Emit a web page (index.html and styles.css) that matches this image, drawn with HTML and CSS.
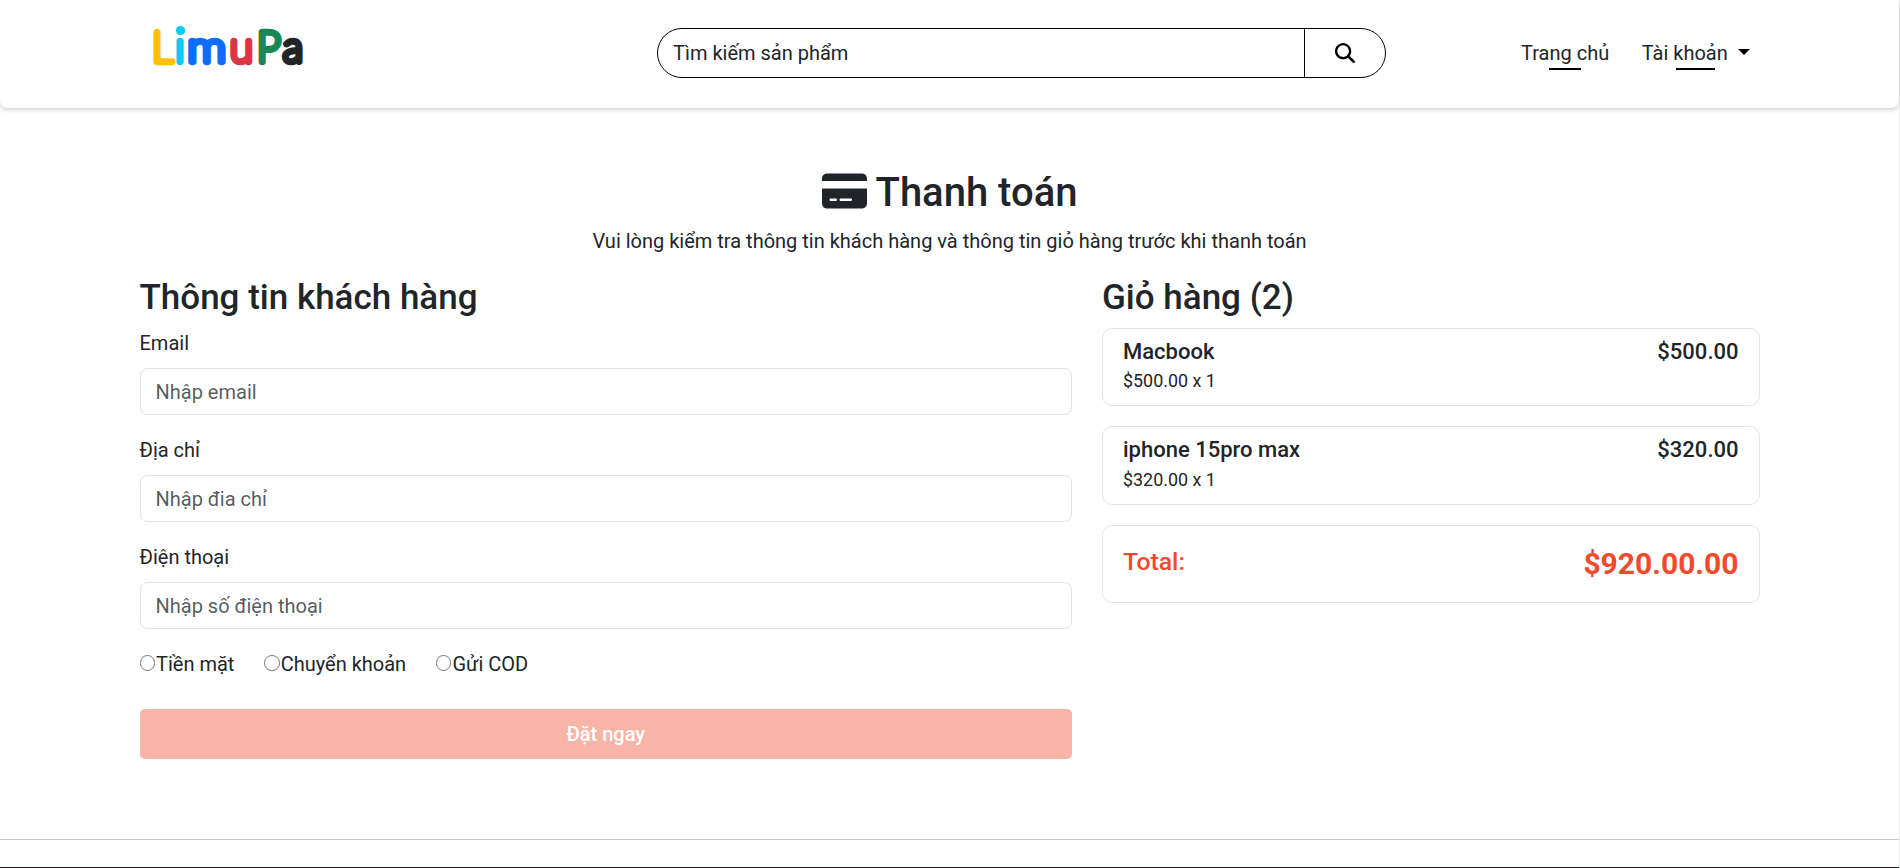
FILE: index.html
```html
<!DOCTYPE html>
<html lang="vi">
<head>
<meta charset="utf-8">
<title>Thanh toán</title>
<link rel="stylesheet" href="styles.css">
</head>
<body>
<div class="page">
  <header class="header">
    <svg class="logo" width="170" height="60" viewBox="0 0 170 60" role="img" aria-label="LimuPa">
      <text class="logo-text" y="47.500"><tspan class="c-yellow" x="12">L</tspan><tspan class="c-cyan" x="35.500">ı</tspan></text>
      <circle class="logo-dot" cx="40.500" cy="16.500" r="4.600"/>
      <text class="logo-text c-blue" transform="translate(47.600 47.500) scale(1.160 1)">m</text>
      <text class="logo-text" y="47.500"><tspan class="c-red" x="90">u</tspan><tspan class="c-green" x="117">P</tspan><tspan class="c-dark" x="143">a</tspan></text>
    </svg>
    <form class="search">
      <input class="search-input" type="text" placeholder="Tìm kiếm sản phẩm">
      <button class="search-btn" type="button" aria-label="Tìm kiếm">
        <svg width="20" height="20" viewBox="0 0 512 512"><path fill="#000" d="M416 208c0 45.900-14.900 88.300-40 122.700L502.600 457.400c12.500 12.500 12.500 32.800 0 45.300s-32.800 12.500-45.300 0L330.700 376c-34.400 25.200-76.800 40-122.700 40C93.100 416 0 322.900 0 208S93.100 0 208 0S416 93.100 416 208zM208 358a150 150 0 1 0 0-300 150 150 0 1 0 0 300z"/></svg>
      </button>
    </form>
    <nav class="nav">
      <a class="nav-link home">Trang chủ</a>
      <a class="nav-link account">Tài khoản<span class="caret"></span></a>
    </nav>
  </header>

  <main class="main">
    <section class="intro">
      <h1 class="title">
        <svg width="45" height="40" viewBox="0 0 576 512"><path fill="#212529" d="M64 32C28.700 32 0 60.700 0 96v32H576V96c0-35.300-28.700-64-64-64H64zM576 224H0V416c0 35.300 28.700 64 64 64H512c35.300 0 64-28.700 64-64V224zM112 352h64c8.800 0 16 7.200 16 16s-7.200 16-16 16H112c-8.800 0-16-7.200-16-16s7.200-16 16-16zm112 16c0-8.800 7.200-16 16-16H368c8.800 0 16 7.200 16 16s-7.200 16-16 16H240c-8.800 0-16-7.200-16-16z"/></svg>
        <span class="title-text">Thanh toán</span>
      </h1>
      <p class="lead">Vui lòng kiểm tra thông tin khách hàng và thông tin giỏ hàng trước khi thanh toán</p>
    </section>

    <div class="columns">
      <form class="customer">
        <h2 class="heading">Thông tin khách hàng</h2>
        <div class="field"><label>Email</label><input class="control" placeholder="Nhập email"></div>
        <div class="field"><label>Địa chỉ</label><input class="control" placeholder="Nhập đia chỉ"></div>
        <div class="field"><label>Điện thoại</label><input class="control" placeholder="Nhập số điện thoại"></div>
        <div class="options">
          <label class="option"><span class="radio"></span>Tiền mặt</label>
          <label class="option"><span class="radio"></span>Chuyển khoản</label>
          <label class="option"><span class="radio"></span>Gửi COD</label>
        </div>
        <button class="submit" type="button">Đặt ngay</button>
      </form>

      <section class="cart">
        <h2 class="heading">Giỏ hàng (2)</h2>
        <div class="card">
          <div><div class="name">Macbook</div><div class="qty">$500.00 x 1</div></div>
          <div class="name">$500.00</div>
        </div>
        <div class="card">
          <div><div class="name">iphone 15pro max</div><div class="qty">$320.00 x 1</div></div>
          <div class="name">$320.00</div>
        </div>
        <div class="card total">
          <span class="total-label">Total:</span>
          <span class="total-sum">$920.00.00</span>
        </div>
      </section>
    </div>
  </main>
  <footer class="footer"></footer>
</div>
</body>
</html>
```
FILE: styles.css
```css
* { box-sizing: border-box; }
body {
  margin: 0;
  background: #fff;
  color: #212529;
  font: 400 20px/30px Roboto, sans-serif;
  overflow: hidden;
}
h1, h2, p { margin: 0; }
.page {
  height: 868px;
  display: flex;
  flex-direction: column;
  border-right: 1px solid #ececec;
}
.header {
  height: 108px;
  flex: none;
  display: flex;
  align-items: flex-start;
  padding: 14px 0 0 139.500px;
  border-radius: 0 0 8px 8px;
  box-shadow: 0 2px 5px rgba(0, 0, 0, .18);
}
.logo { flex: none; }
.logo-text {
  font: 100 42px Lato, sans-serif;
  stroke-width: 6.600px;
  stroke-linejoin: round;
}
.logo-dot { fill: #0dcaf0; }
.c-yellow { fill: #ffc107; stroke: #ffc107; }
.c-cyan { fill: #0dcaf0; stroke: #0dcaf0; }
.c-blue { fill: #0d6efd; stroke: #0d6efd; }
.c-red { fill: #dc3545; stroke: #dc3545; }
.c-green { fill: #198754; stroke: #198754; }
.c-dark { fill: #212529; stroke: #212529; }
.search {
  display: flex;
  width: 729px;
  height: 50px;
  margin: 14px 0 0 347.500px;
  border: 1px solid #000;
  border-radius: 25px;
  overflow: hidden;
}
.search-input {
  flex: 1;
  min-width: 0;
  border: 0;
  padding: 0 15px;
  font: inherit;
  background: none;
}
.search-input::placeholder { color: #212529; opacity: 1; }
.search-btn {
  width: 81px;
  border: 0;
  border-left: 1px solid #000;
  background: none;
  padding: 0;
  display: flex;
  align-items: center;
  justify-content: center;
}
.nav { display: flex; gap: 32.500px; margin: 24px 0 0 135px; }
.nav-link { height: 32px; padding-bottom: 2px; display: flex; align-items: center; white-space: nowrap; }
.home {
  background: linear-gradient(#000, #000) 28px 100% / 32px 2px no-repeat;
}
.account {
  background: linear-gradient(#000, #000) 34.500px 100% / 39px 2px no-repeat;
}
.caret {
  margin: 0 0 2px 10px;
  border: 6px solid transparent;
  border-top-color: #000;
  border-bottom: 0;
}
.main { width: 1620px; margin-left: 139.500px; flex: none; }
.intro { padding-top: 59px; text-align: center; }
.title {
  display: flex;
  justify-content: center;
  align-items: center;
  gap: 9px;
  height: 48px;
  font-size: 40px;
  font-weight: 500;
}
.title-text { padding-top: 3px; }
.lead { margin-top: 11px; }
.columns { display: grid; grid-template-columns: 932.500px 657.500px; gap: 30px; margin-top: 21px; }
.heading { font-size: 35px; line-height: 42px; font-weight: 500; margin-bottom: 9px; }
.customer .heading { margin-bottom: 4px; }
.field { display: flex; flex-direction: column; margin-bottom: 15px; }
.field label { padding: 5px 0 10px; }
.control {
  height: 47px;
  border: 1px solid #dee2e6;
  border-radius: 7.500px;
  padding: 0 15px;
  font: inherit;
}
.control::placeholder { color: #212529bf; opacity: 1; }
.options { display: flex; gap: 29.800px; height: 30px; margin-top: 20px; }
.option { display: flex; align-items: center; }
.radio {
  width: 15.500px;
  height: 15.500px;
  margin: 0 1px 2px 0;
  border: 1px solid #767676;
  border-radius: 50%;
}
.submit {
  width: 100%;
  height: 50px;
  margin-top: 30px;
  border: 0;
  border-radius: 5px;
  background: #f9b4a8;
  color: #fff;
  font: 500 20px Roboto, sans-serif;
}
.card {
  display: flex;
  justify-content: space-between;
  height: 78.400px;
  margin-bottom: 20px;
  padding: 9px 20px 0;
  border: 1px solid #e2e5e8;
  border-radius: 10px;
}
.name { font-size: 22px; line-height: 27px; font-weight: 500; }
.qty { font-size: 17.900px; line-height: 26px; margin-top: 3.200px; }
.total { color: #f1492b; align-items: flex-start; padding-top: 20px; }
.total-label { font-size: 24.800px; line-height: 32px; font-weight: 500; }
.total-sum { font-size: 30px; font-weight: 700; line-height: 36px; }
.footer {
  margin-top: 80px;
  flex: 1;
  border-top: 1px solid #c8c8c8;
  border-bottom: 1px solid #2a1a1a;
}
```
